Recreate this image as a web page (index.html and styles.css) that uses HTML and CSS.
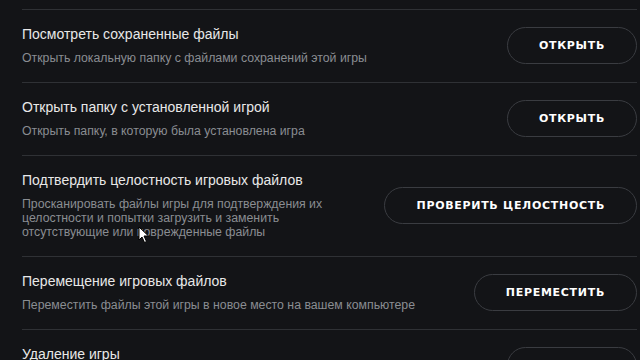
FILE: index.html
```html
<!DOCTYPE html>
<html lang="ru">
<head>
<meta charset="utf-8">
<link rel="stylesheet" href="styles.css">
</head>
<body>
<div class="settings">
  <div class="row">
    <div class="text">
      <div class="title">Посмотреть сохраненные файлы</div>
      <div class="desc">Открыть локальную папку с файлами сохранений этой игры</div>
    </div>
    <button class="btn">Открыть</button>
  </div>
  <div class="row">
    <div class="text">
      <div class="title">Открыть папку с установленной игрой</div>
      <div class="desc">Открыть папку, в которую была установлена игра</div>
    </div>
    <button class="btn">Открыть</button>
  </div>
  <div class="row">
    <div class="text">
      <div class="title">Подтвердить целостность игровых файлов</div>
      <div class="desc">Просканировать файлы игры для подтверждения их целостности и попытки загрузить и заменить отсутствующие или поврежденные файлы</div>
    </div>
    <button class="btn">Проверить целостность</button>
  </div>
  <div class="row">
    <div class="text">
      <div class="title">Перемещение игровых файлов</div>
      <div class="desc">Переместить файлы этой игры в новое место на вашем компьютере</div>
    </div>
    <button class="btn">Переместить</button>
  </div>
  <div class="row">
    <div class="text">
      <div class="title">Удаление игры</div>
      <div class="desc">Удалить эту игру с вашего компьютера</div>
    </div>
    <button class="btn">Удалить</button>
  </div>
</div>
<svg class="cursor" width="12" height="18" viewBox="0 0 12 18"><path d="M1 1 L1 14 L4 11 L6.5 16.5 L8.5 15.5 L6 10 L10.5 10 Z" fill="#fff" stroke="#000" stroke-width="1"/></svg>
</body>
</html>
```
FILE: styles.css
```css
html, body {
  margin: 0;
  padding: 0;
  background: #131417;
  overflow: hidden;
  height: 360px;
}
body {
  font-family: "Liberation Sans", Arial, sans-serif;
  position: relative;
}
.settings {
  padding: 9px 3px 0 22px;
}
.row {
  display: flex;
  align-items: center;
  gap: 30px;
  border-top: 1px solid #2f3135;
  padding: 15.5px 0 17.5px;
}
.text {
  flex: 1;
  min-width: 0;
}
.title {
  color: #e8e8e8;
  font-size: 14px;
  line-height: 17px;
}
.desc {
  margin-top: 8px;
  color: #8a8d92;
  font-size: 12.3px;
  line-height: 14px;
}
.btn {
  flex: none;
  height: 37px;
  padding: 0 31px;
  border: 1.5px solid #3a3c41;
  border-radius: 19px;
  background: transparent;
  color: #ffffff;
  font-family: "DejaVu Sans", sans-serif;
  font-weight: bold;
  font-size: 11px;
  letter-spacing: 0.7px;
  text-transform: uppercase;
  margin-top: 1px;
}
.cursor {
  position: absolute;
  left: 138px;
  top: 226px;
}
```
